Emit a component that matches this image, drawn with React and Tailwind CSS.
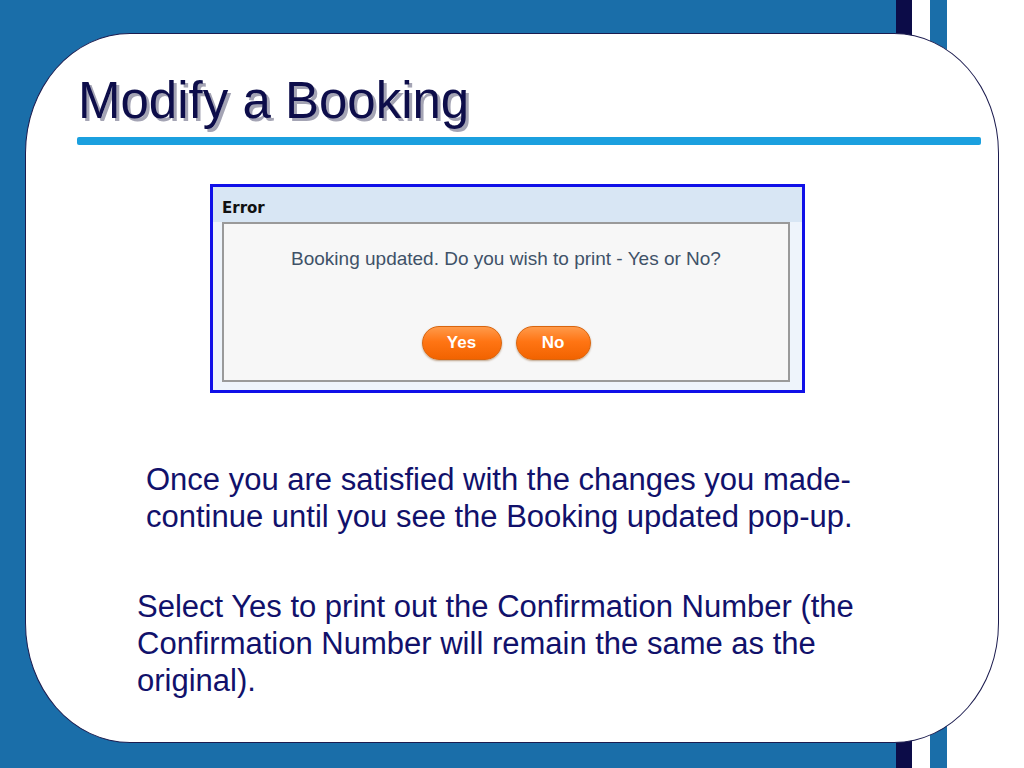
import React from 'react';

const slideFont = { fontFamily: '"Liberation Sans", Arial, sans-serif' };

function DialogButton({ label, width }) {
  return (
    <button
      className={`h-[34px] ${width} rounded-full border border-[#d9650e] bg-[linear-gradient(to_bottom,#ff9a4a,#ff7514_45%,#f26300)] text-[17px] font-bold text-white shadow-[0_1px_2px_rgba(120,60,0,0.45)]`}
    >
      {label}
    </button>
  );
}

function ErrorDialog() {
  return (
    <div className="ml-[184px] mt-[39px] flex h-[209px] w-[595px] flex-col border-[3px] border-[#1010e8] bg-[#eef4fb]">
      {/* title bar */}
      <div className="flex h-[35px] items-end bg-[#d8e6f4] pb-[3px] pl-[9px] text-[15px] font-bold text-[#111]" style={{ fontFamily: '"DejaVu Sans", Tahoma, sans-serif' }}>
        Error
      </div>
      <div className="flex flex-1 pl-[9px] pr-[12px] pb-[8px]">
        <div className="flex flex-1 flex-col items-center border-2 border-[#9a9a9a] bg-[#f7f7f7] pt-[25px]">
          <p className="text-[19px] leading-[20px] text-[#3f5268]">
            Booking updated. Do you wish to print - Yes or No?
          </p>
          <div className="mt-[57px] flex gap-[14px]">
            <DialogButton label="Yes" width="w-[80px]" />
            <DialogButton label="No" width="w-[75px]" />
          </div>
        </div>
      </div>
    </div>
  );
}

export default function App() {
  return (
    <div
      className="h-[768px] w-[1024px] overflow-hidden bg-[linear-gradient(to_right,#1a6ea9_896px,#0c0c48_896px,#0c0c48_912px,#ffffff_912px,#ffffff_930px,#1a6ea9_930px,#1a6ea9_947px,#ffffff_947px)] pt-[33px] pl-[25px]"
      style={slideFont}
    >
      <div className="flex h-[710px] w-[974px] flex-col rounded-[105px/120px] border border-[#1c1c4f] bg-white">
        <h1 className="ml-[52px] mt-[41px] text-[51px] leading-[52px] text-[#0d0d4a] [text-shadow:3px_3px_0_#a4a4b4]">
          Modify a Booking
        </h1>
        <div className="ml-[51px] mt-[10px] h-[8px] w-[904px] rounded-[2px] bg-[#1ba0df]" />

        <ErrorDialog />

        <p className="ml-[120px] mt-[68px] text-[31px] leading-[37px] text-[#11116b]">
          Once you are satisfied with the changes you made-
          <br />
          continue until you see the Booking updated pop-up.
        </p>
        <p className="ml-[111px] mt-[53px] text-[31px] leading-[37px] text-[#11116b]">
          Select Yes to print out the Confirmation Number (the
          <br />
          Confirmation Number will remain the same as the
          <br />
          original).
        </p>
      </div>
    </div>
  );
}
